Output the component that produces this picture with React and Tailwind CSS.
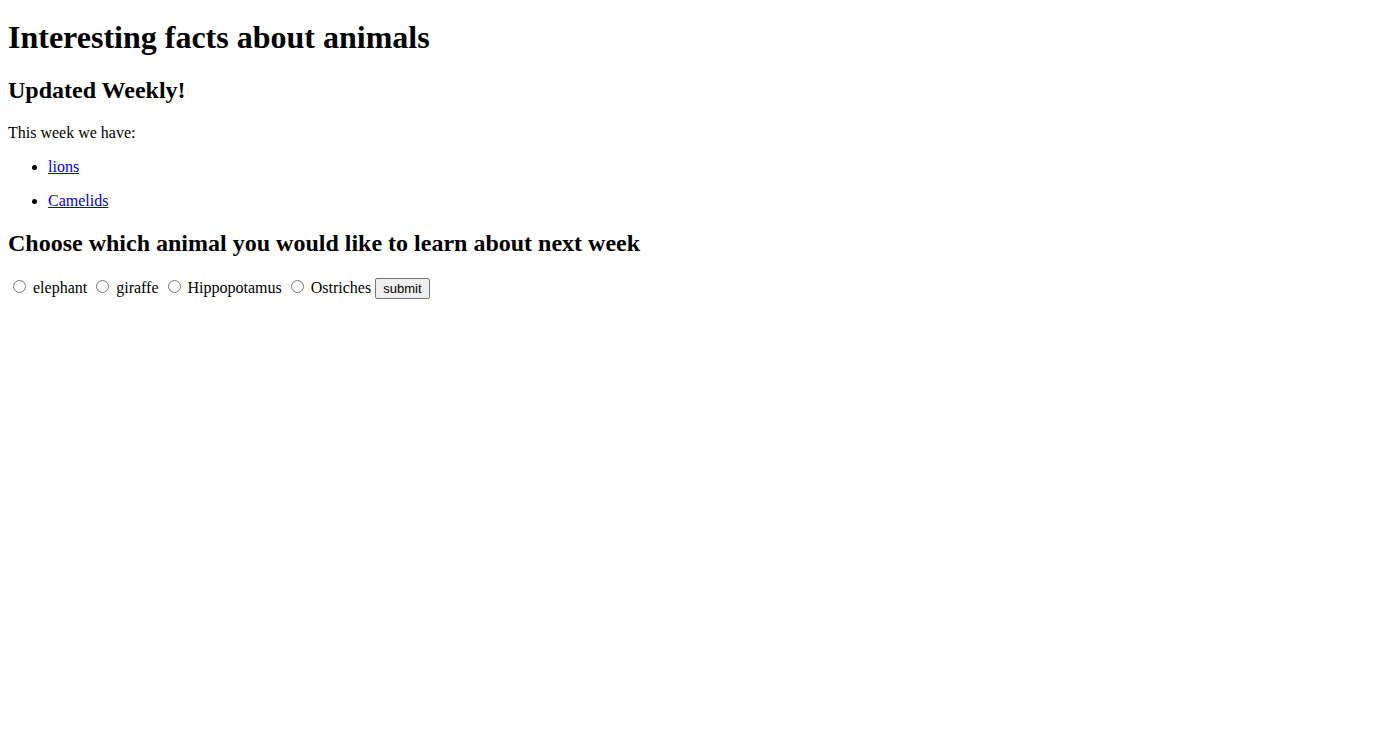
import React from "react";

const facts = ["lions", "Camelids"];
const choices = ["elephant", "giraffe", "Hippopotamus", "Ostriches"];

export default function App() {
  return (
    <main className="px-2 pt-[19px] font-['Liberation_Serif','Times_New_Roman',serif] text-[16px] leading-[18px] text-black">
      <h1 className="text-[32px] leading-[36px] font-bold">Interesting facts about animals</h1>
      <h2 className="mt-[21px] text-[24px] leading-[28px] font-bold">Updated Weekly!</h2>
      <p className="mt-5">This week we have:</p>
      <ul className="mt-4 list-disc space-y-4 pl-10">
        {facts.map((name) => (
          <li key={name}>
            <a href={"#" + name} className="text-[#0000ee] underline">{name}</a>
          </li>
        ))}
      </ul>
      <h2 className="mt-[19px] text-[24px] leading-[28px] font-bold">
        Choose which animal you would like to learn about next week
      </h2>
      <form className="mt-[21px] flex flex-wrap items-center gap-1" onSubmit={(e) => e.preventDefault()}>
        {choices.map((name) => (
          <label key={name} className="flex items-center gap-[7px] pb-[2px] pl-[5px]">
            <input type="radio" name="animal" value={name} className="mb-[2px] size-[13px]" />
            {name}
          </label>
        ))}
        <button
          type="submit"
          className="rounded-[2px] border border-[#767676] bg-[#efefef] px-[7px] py-px font-['Liberation_Sans',Arial,sans-serif] text-[13px] leading-[17px]"
        >
          submit
        </button>
      </form>
    </main>
  );
}
